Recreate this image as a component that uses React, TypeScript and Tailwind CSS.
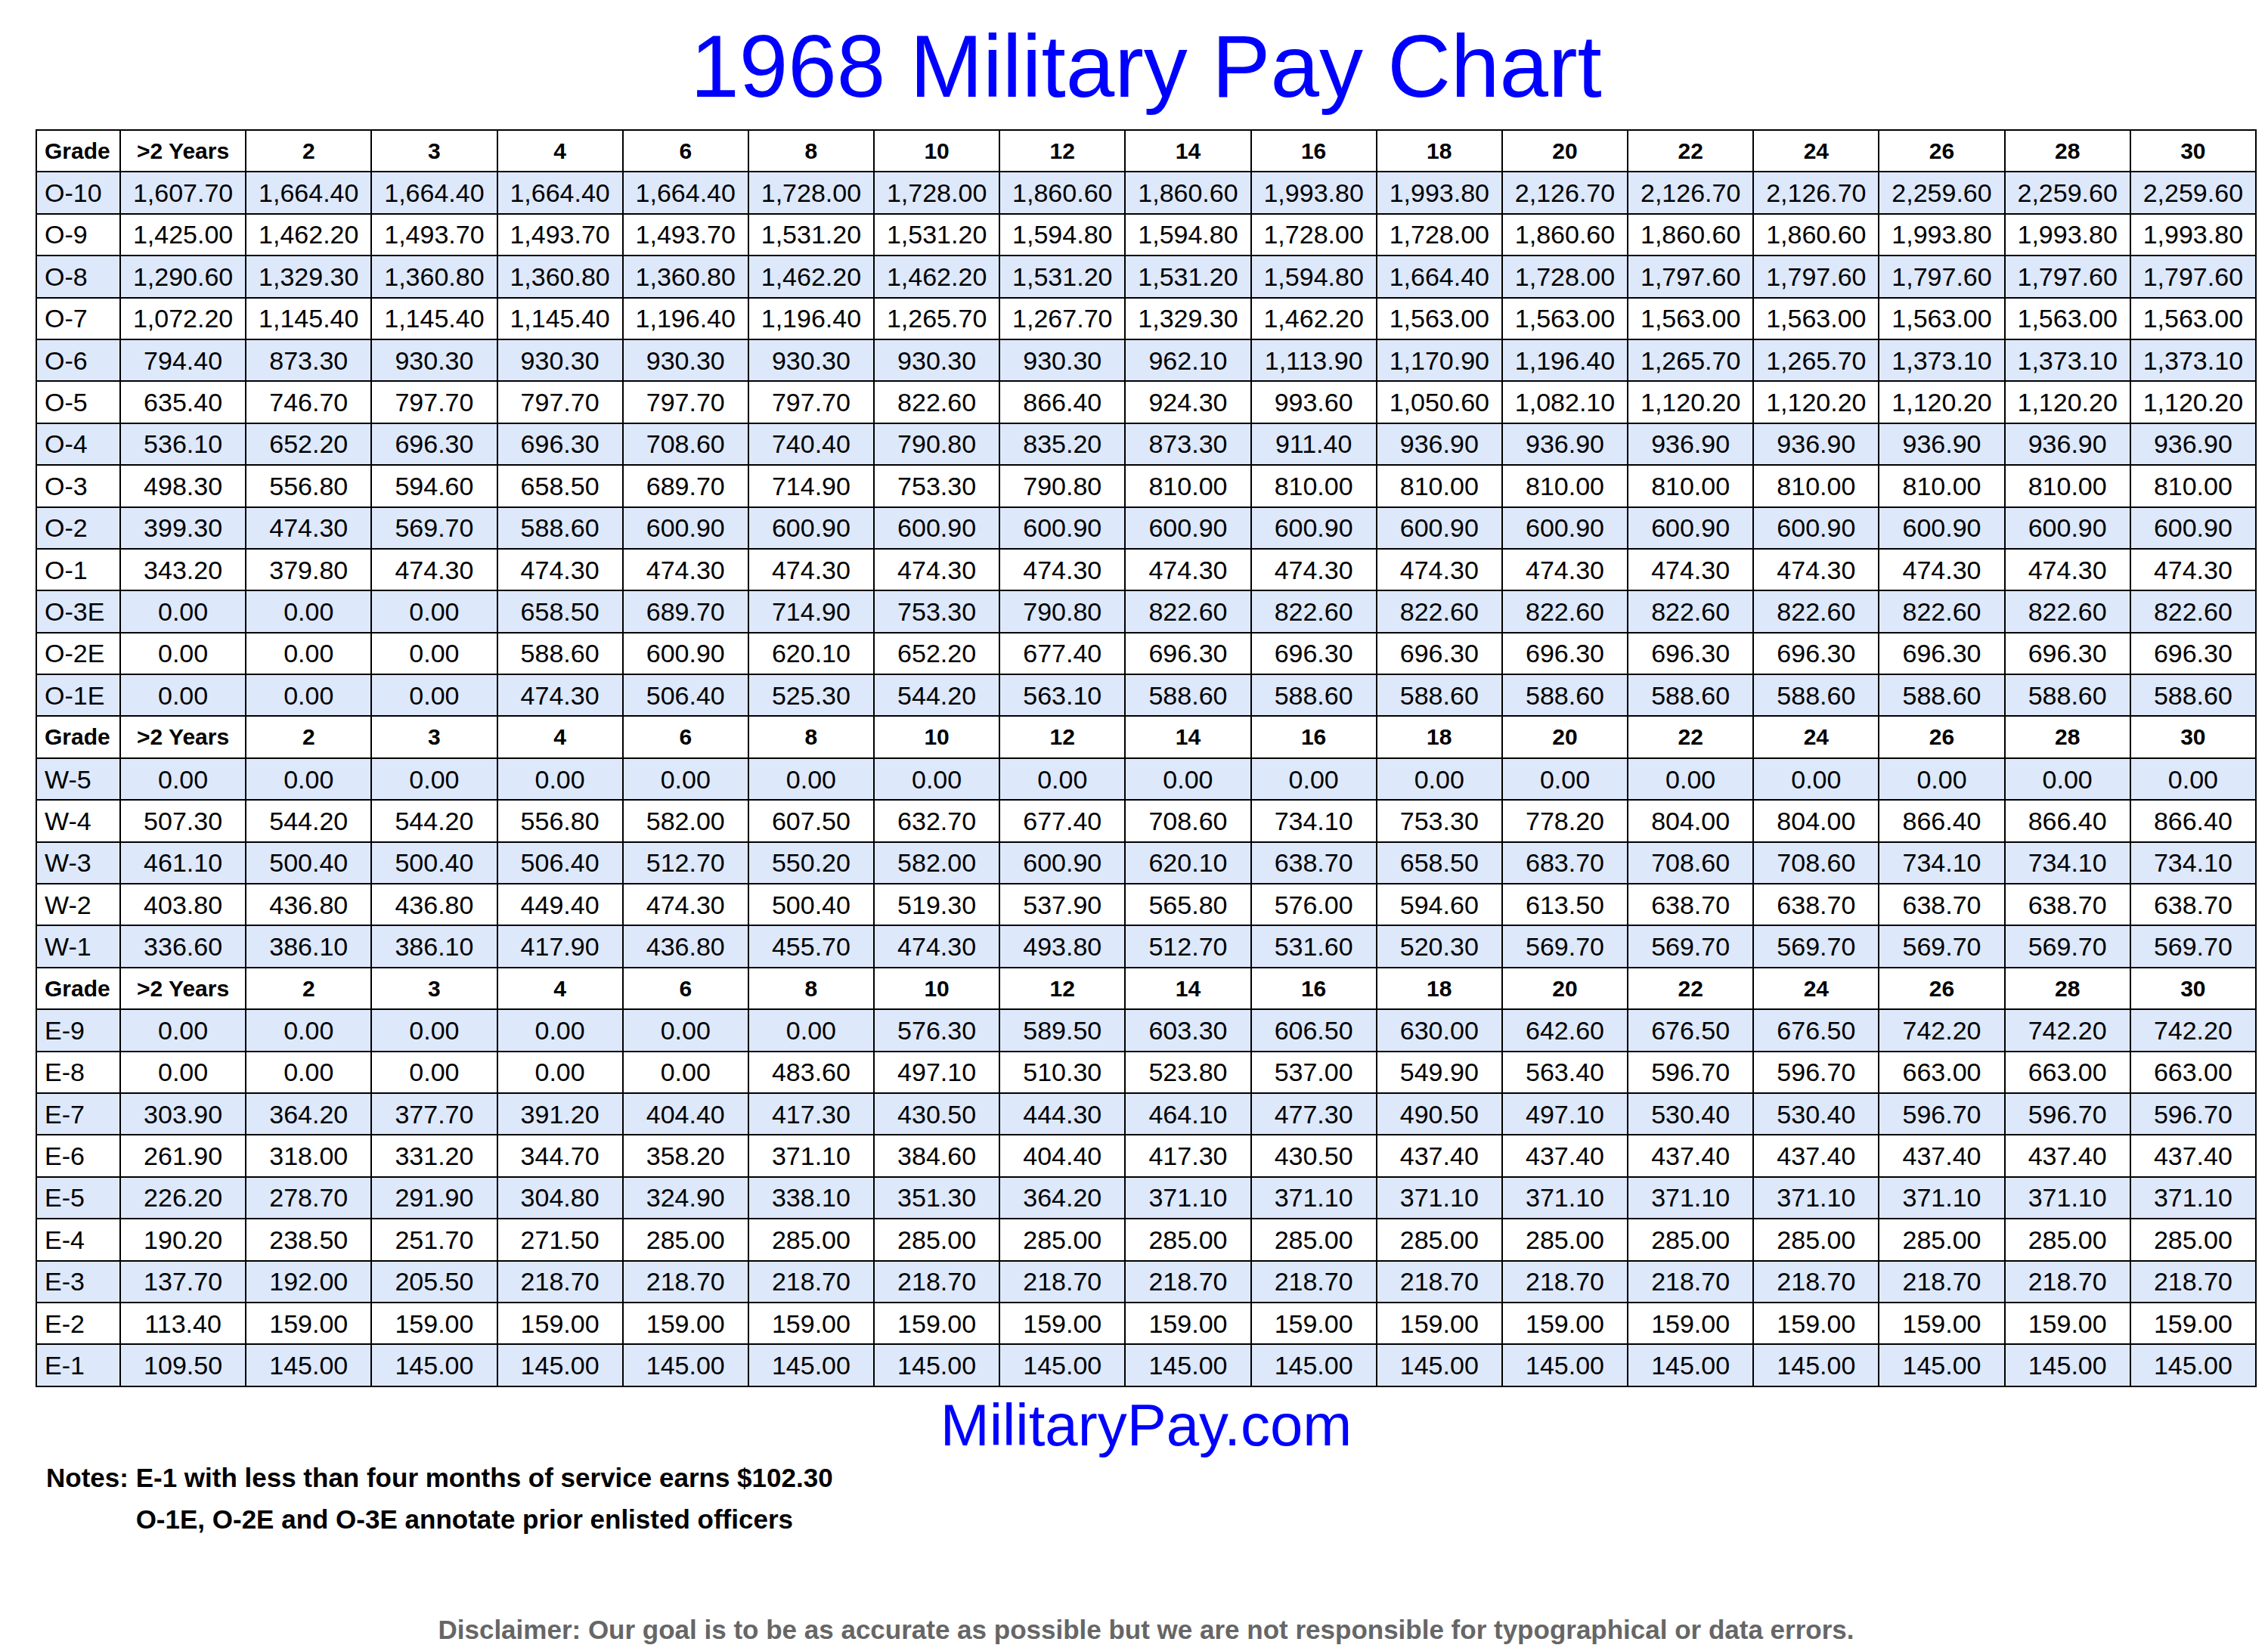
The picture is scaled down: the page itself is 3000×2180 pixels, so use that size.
import React from "react";

const rep = (v: string, n: number) => Array.from({ length: n }, () => v);

const headers = [">2 Years", "2", "3", "4", "6", "8", "10", "12", "14", "16", "18", "20", "22", "24", "26", "28", "30"];

type Row = { grade: string; pay: string[] };

const officers: Row[] = [
  { grade: "O-10", pay: ["1,607.70", "1,664.40", "1,664.40", "1,664.40", "1,664.40", "1,728.00", "1,728.00", "1,860.60", "1,860.60", "1,993.80", "1,993.80", "2,126.70", "2,126.70", "2,126.70", "2,259.60", "2,259.60", "2,259.60"] },
  { grade: "O-9", pay: ["1,425.00", "1,462.20", "1,493.70", "1,493.70", "1,493.70", "1,531.20", "1,531.20", "1,594.80", "1,594.80", "1,728.00", "1,728.00", "1,860.60", "1,860.60", "1,860.60", "1,993.80", "1,993.80", "1,993.80"] },
  { grade: "O-8", pay: ["1,290.60", "1,329.30", "1,360.80", "1,360.80", "1,360.80", "1,462.20", "1,462.20", "1,531.20", "1,531.20", "1,594.80", "1,664.40", "1,728.00", "1,797.60", "1,797.60", "1,797.60", "1,797.60", "1,797.60"] },
  { grade: "O-7", pay: ["1,072.20", "1,145.40", "1,145.40", "1,145.40", "1,196.40", "1,196.40", "1,265.70", "1,267.70", "1,329.30", "1,462.20", ...rep("1,563.00", 7)] },
  { grade: "O-6", pay: ["794.40", "873.30", ...rep("930.30", 6), "962.10", "1,113.90", "1,170.90", "1,196.40", "1,265.70", "1,265.70", "1,373.10", "1,373.10", "1,373.10"] },
  { grade: "O-5", pay: ["635.40", "746.70", ...rep("797.70", 4), "822.60", "866.40", "924.30", "993.60", "1,050.60", "1,082.10", ...rep("1,120.20", 5)] },
  { grade: "O-4", pay: ["536.10", "652.20", "696.30", "696.30", "708.60", "740.40", "790.80", "835.20", "873.30", "911.40", ...rep("936.90", 7)] },
  { grade: "O-3", pay: ["498.30", "556.80", "594.60", "658.50", "689.70", "714.90", "753.30", "790.80", ...rep("810.00", 9)] },
  { grade: "O-2", pay: ["399.30", "474.30", "569.70", "588.60", ...rep("600.90", 13)] },
  { grade: "O-1", pay: ["343.20", "379.80", ...rep("474.30", 15)] },
  { grade: "O-3E", pay: [...rep("0.00", 3), "658.50", "689.70", "714.90", "753.30", "790.80", ...rep("822.60", 9)] },
  { grade: "O-2E", pay: [...rep("0.00", 3), "588.60", "600.90", "620.10", "652.20", "677.40", ...rep("696.30", 9)] },
  { grade: "O-1E", pay: [...rep("0.00", 3), "474.30", "506.40", "525.30", "544.20", "563.10", ...rep("588.60", 9)] },
];

const warrants: Row[] = [
  { grade: "W-5", pay: rep("0.00", 17) },
  { grade: "W-4", pay: ["507.30", "544.20", "544.20", "556.80", "582.00", "607.50", "632.70", "677.40", "708.60", "734.10", "753.30", "778.20", "804.00", "804.00", "866.40", "866.40", "866.40"] },
  { grade: "W-3", pay: ["461.10", "500.40", "500.40", "506.40", "512.70", "550.20", "582.00", "600.90", "620.10", "638.70", "658.50", "683.70", "708.60", "708.60", "734.10", "734.10", "734.10"] },
  { grade: "W-2", pay: ["403.80", "436.80", "436.80", "449.40", "474.30", "500.40", "519.30", "537.90", "565.80", "576.00", "594.60", "613.50", ...rep("638.70", 5)] },
  { grade: "W-1", pay: ["336.60", "386.10", "386.10", "417.90", "436.80", "455.70", "474.30", "493.80", "512.70", "531.60", "520.30", ...rep("569.70", 6)] },
];

const enlisted: Row[] = [
  { grade: "E-9", pay: [...rep("0.00", 6), "576.30", "589.50", "603.30", "606.50", "630.00", "642.60", "676.50", "676.50", "742.20", "742.20", "742.20"] },
  { grade: "E-8", pay: [...rep("0.00", 5), "483.60", "497.10", "510.30", "523.80", "537.00", "549.90", "563.40", "596.70", "596.70", "663.00", "663.00", "663.00"] },
  { grade: "E-7", pay: ["303.90", "364.20", "377.70", "391.20", "404.40", "417.30", "430.50", "444.30", "464.10", "477.30", "490.50", "497.10", "530.40", "530.40", "596.70", "596.70", "596.70"] },
  { grade: "E-6", pay: ["261.90", "318.00", "331.20", "344.70", "358.20", "371.10", "384.60", "404.40", "417.30", "430.50", ...rep("437.40", 7)] },
  { grade: "E-5", pay: ["226.20", "278.70", "291.90", "304.80", "324.90", "338.10", "351.30", "364.20", ...rep("371.10", 9)] },
  { grade: "E-4", pay: ["190.20", "238.50", "251.70", "271.50", ...rep("285.00", 13)] },
  { grade: "E-3", pay: ["137.70", "192.00", "205.50", ...rep("218.70", 14)] },
  { grade: "E-2", pay: ["113.40", ...rep("159.00", 16)] },
  { grade: "E-1", pay: ["109.50", ...rep("145.00", 16)] },
];

function HeaderRow() {
  return (
    <tr className="h-[55.4px] bg-white">
      <th className="border-2 border-black pl-[10px] text-left text-[30px] font-bold leading-none">Grade</th>
      {headers.map((h) => (
        <th key={h} className="border-2 border-black text-center text-[30px] font-bold leading-none">
          {h}
        </th>
      ))}
    </tr>
  );
}

function Section({ rows }: { rows: Row[] }) {
  return (
    <>
      {rows.map((r, i) => (
        <tr key={r.grade} className={`h-[55.4px] ${i % 2 === 0 ? "bg-[#dde8fb]" : "bg-white"}`}>
          <td className="border-2 border-black pl-[10px] text-left text-[34px] leading-none">{r.grade}</td>
          {r.pay.map((p, j) => (
            <td key={j} className="border-2 border-black text-center text-[34px] leading-none">
              {p}
            </td>
          ))}
        </tr>
      ))}
    </>
  );
}

export default function App() {
  return (
    <div className="w-[3000px] h-[2180px] bg-white text-black font-['Liberation_Sans',Arial,sans-serif]">
      <div className="ml-[47px] w-[2938px]">
        <h1 className="pt-[30px] mb-[25px] text-center text-[116px] leading-none text-[#0000ff]">
          1968 Military Pay Chart
        </h1>

        <table className="w-[2938px] table-fixed border-collapse">
          <colgroup>
            <col className="w-[111px]" />
            {headers.map((h) => (
              <col key={h} />
            ))}
          </colgroup>
          <tbody>
            <HeaderRow />
            <Section rows={officers} />
            <HeaderRow />
            <Section rows={warrants} />
            <HeaderRow />
            <Section rows={enlisted} />
          </tbody>
        </table>

        <div className="mt-[11px] text-center text-[78px] leading-none text-[#0000ff]">MilitaryPay.com</div>

        {/* notes */}
        <div className="mt-[3px] flex pl-[14px] text-[35px] font-bold leading-[55px]">
          <span className="whitespace-pre">Notes: </span>
          <div>
            <p>E-1 with less than four months of service earns $102.30</p>
            <p>O-1E, O-2E and O-3E annotate prior enlisted officers</p>
          </div>
        </div>

        <p className="mt-[101px] text-center text-[35px] font-bold leading-none text-[#666666]">
          Disclaimer: Our goal is to be as accurate as possible but we are not responsible for typographical or data errors.
        </p>
      </div>
    </div>
  );
}
